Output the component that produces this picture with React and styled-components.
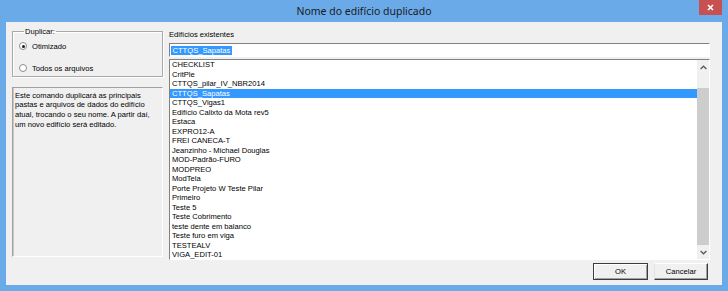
import React from 'react';
import styled, { createGlobalStyle } from 'styled-components';

const GlobalStyle = createGlobalStyle`
  html, body {
    margin: 0;
    padding: 0;
    background: #6aaae9;
  }
  body {
    font-family: "Liberation Sans", Arial, sans-serif;
    overflow: hidden;
  }
`;

const buildings = [
  'CHECKLIST',
  'CritPle',
  'CTTQS_pilar_IV_NBR2014',
  'CTTQS_Sapatas',
  'CTTQS_Vigas1',
  'Edifício Calixto da Mota rev5',
  'Estaca',
  'EXPRO12-A',
  'FREI CANECA-T',
  'Jeanzinho - Michael Douglas',
  'MOD-Padrão-FURO',
  'MODPREO',
  'ModTela',
  'Porte Projeto W Teste Pilar',
  'Primeiro',
  'Teste 5',
  'Teste Cobrimento',
  'teste dente em balanco',
  'Teste furo em viga',
  'TESTEALV',
  'VIGA_EDIT-01',
];

const Window = styled.div`
  width: 728px;
  height: 291px;
  box-sizing: border-box;
  background: #6aaae9;
  padding: 0 6px 6px;
  display: flex;
  flex-direction: column;
`;

const TitleBar = styled.div`
  height: 22px;
  flex-shrink: 0;
  display: grid;
  grid-template-columns: 1fr auto 1fr;
  align-items: start;
`;

const Title = styled.div`
  grid-column: 2;
  font-family: "Noto Sans", "Open Sans", sans-serif;
  font-size: 10.5px;
  line-height: 22px;
  color: #1b1b1b;
`;

const CloseButton = styled.button`
  grid-column: 3;
  justify-self: end;
  width: 23px;
  height: 15px;
  border: 0;
  padding: 0;
  background: #c75050;
  display: flex;
  align-items: center;
  justify-content: center;
`;

const Client = styled.div`
  flex: 1;
  background: #f0f0f0;
  padding: 5px 12px 5px 6px;
  display: flex;
  flex-direction: column;
  font-size: 7.6px;
  color: #000;
`;

const Main = styled.div`
  display: flex;
  gap: 6px;
  height: 233px;
`;

const LeftColumn = styled.div`
  width: 151px;
  display: flex;
  flex-direction: column;
`;

const GroupBox = styled.fieldset`
  margin: 0;
  padding: 4.5px 0 2.5px 6px;
  min-inline-size: 0;
  border: 1px solid #a9a9a9;
  box-shadow: inset 1px 1px 0 #fff, 1px 1px 0 #fff;
  display: flex;
  flex-direction: column;
  gap: 11px;
`;

const Legend = styled.legend`
  margin-left: 5px;
  padding: 0 1px;
  line-height: 9px;
`;

const RadioRow = styled.label`
  display: flex;
  align-items: center;
  gap: 5px;
  height: 11px;
`;

const RadioCircle = styled.span`
  width: 8px;
  height: 8px;
  box-sizing: border-box;
  border-radius: 50%;
  border: 1px solid #8d8d8d;
  background: #fff;
  display: flex;
  align-items: center;
  justify-content: center;
  &::after {
    content: '';
    width: 3px;
    height: 3px;
    border-radius: 50%;
    background: ${p => (p.$checked ? '#1a1a1a' : 'transparent')};
  }
`;

const Description = styled.div`
  margin-top: 9.5px;
  height: 170px;
  box-sizing: border-box;
  border: 1px solid;
  border-color: #a0a0a0 #fff #fff #a0a0a0;
  box-shadow: inset 1px 0 0 #c8c8c8;
  padding: 3px 2px;
  line-height: 9.9px;
`;

const RightColumn = styled.div`
  flex: 1;
  display: flex;
  flex-direction: column;
`;

const FieldLabel = styled.div`
  margin-top: 2.5px;
  line-height: 10px;
`;

const EditBox = styled.div`
  margin-top: 3.5px;
  height: 14px;
  box-sizing: border-box;
  background: #fff;
  border: 1px solid;
  border-color: #828282 #fff #fff #828282;
  display: flex;
  align-items: center;
  padding-left: 1px;
`;

const Selection = styled.span`
  background: #3399ff;
  color: #fff;
  line-height: 9px;
  padding: 0 1.5px;
`;

const ListBox = styled.div`
  margin-top: 2px;
  flex: 1;
  min-height: 0;
  box-sizing: border-box;
  background: #fff;
  border: 1px solid;
  border-color: #828282 #fff #fff #828282;
  display: flex;
  overflow: hidden;
`;

const Items = styled.ul`
  flex: 1;
  margin: 0;
  padding: 0;
  list-style: none;
  overflow: hidden;
`;

const Item = styled.li`
  height: 9.5px;
  line-height: 9.5px;
  padding-left: 2px;
  white-space: nowrap;
  background: ${p => (p.$selected ? '#3399ff' : 'transparent')};
  color: ${p => (p.$selected ? '#fff' : '#000')};
`;

const ScrollBar = styled.div`
  width: 12px;
  background: #f0f0f0;
  display: flex;
  flex-direction: column;
`;

const ArrowButton = styled.div`
  height: ${p => p.$h}px;
  display: flex;
  align-items: center;
  justify-content: center;
`;

const Track = styled.div`
  flex: 1;
  display: flex;
  flex-direction: column;
  padding-top: 13px;
`;

const Thumb = styled.div`
  flex: 1;
  background: #cdcdcd;
`;

const Footer = styled.div`
  margin-top: 3px;
  display: flex;
  justify-content: flex-end;
  gap: 6px;
  padding-right: 2px;
`;

const Button = styled.button`
  width: ${p => p.$w}px;
  height: 17px;
  box-sizing: border-box;
  padding: 0;
  font-family: inherit;
  font-size: 7.6px;
  color: #000;
  background: #f0f0f0;
  border: 1px solid;
  border-color: ${p => (p.$default ? '#3c3c3c' : '#fff #3c3c3c #3c3c3c #e3e3e3')};
  box-shadow: ${p => (p.$default ? 'inset 1px 1px 0 #fff, inset -1px -1px 0 #a0a0a0' : 'inset -1px -1px 0 #a0a0a0')};
`;

const Chevron = ({ down }) => (
  <svg width="7" height="5" viewBox="0 0 7 5">
    <path
      d={down ? 'M0.6 1 L3.5 3.8 L6.4 1' : 'M0.6 4 L3.5 1.2 L6.4 4'}
      fill="none"
      stroke="#5a5a5a"
      strokeWidth="1.3"
    />
  </svg>
);

export default function App() {
  return (
    <>
      <GlobalStyle />
      <Window>
        <TitleBar>
          <Title>Nome do edifício duplicado</Title>
          <CloseButton aria-label="Fechar">
            <svg width="7" height="7" viewBox="0 0 7 7">
              <path d="M1 1 L6 6 M6 1 L1 6" stroke="#fff" strokeWidth="1.6" />
            </svg>
          </CloseButton>
        </TitleBar>
        <Client>
          <Main>
            <LeftColumn>
              <GroupBox>
                <Legend>Duplicar:</Legend>
                <RadioRow>
                  <RadioCircle $checked />
                  Otimizado
                </RadioRow>
                <RadioRow>
                  <RadioCircle />
                  Todos os arquivos
                </RadioRow>
              </GroupBox>
              <Description>
                Este comando duplicará as principais<br />
                pastas e arquivos de dados do edifício<br />
                atual, trocando o seu nome. A partir daí,<br />
                um novo edifício será editado.
              </Description>
            </LeftColumn>
            <RightColumn>
              <FieldLabel>Edifícios existentes</FieldLabel>
              <EditBox>
                <Selection>CTTQS_Sapatas</Selection>
              </EditBox>
              <ListBox>
                <Items>
                  {buildings.map(name => (
                    <Item key={name} $selected={name === 'CTTQS_Sapatas'}>
                      {name}
                    </Item>
                  ))}
                </Items>
                <ScrollBar>
                  <ArrowButton $h={15}><Chevron /></ArrowButton>
                  <Track><Thumb /></Track>
                  <ArrowButton $h={14}><Chevron down /></ArrowButton>
                </ScrollBar>
              </ListBox>
            </RightColumn>
          </Main>
          <Footer>
            <Button $w={55} $default>OK</Button>
            <Button $w={54}>Cancelar</Button>
          </Footer>
        </Client>
      </Window>
    </>
  );
}
